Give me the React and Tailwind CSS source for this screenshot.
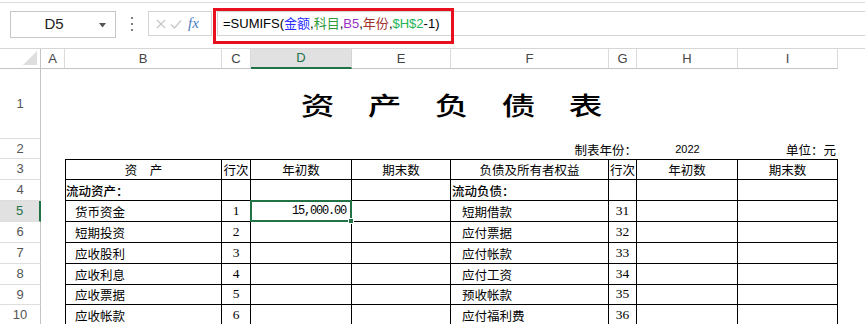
import React from 'react';

const CJK = "font-['Noto_Sans_CJK_SC',sans-serif]";
const SERIF = "font-['Liberation_Serif',serif]";
const HDR = "font-['Liberation_Sans','Noto_Sans_CJK_SC',sans-serif]";

const colLetters = ['A', 'B', 'C', 'D', 'E', 'F', 'G', 'H', 'I'];

const left = [
  ['货币资金', '1'],
  ['短期投资', '2'],
  ['应收股利', '3'],
  ['应收利息', '4'],
  ['应收票据', '5'],
  ['应收帐款', '6'],
];
const right = [
  ['短期借款', '31'],
  ['应付票据', '32'],
  ['应付帐款', '33'],
  ['应付工资', '34'],
  ['预收帐款', '35'],
  ['应付福利费', '36'],
];

function RowHeader({ n }) {
  const sel = n === 5;
  return (
    <div
      className={
        'flex items-center justify-center border-b border-[#dedede] text-[13px] ' +
        HDR +
        (sel
          ? ' bg-[#e1e1e1] text-[#217346] border-r-2 border-r-[#217346]'
          : ' text-[#555] border-r border-r-[#c4c4c4] bg-white')
      }
    >
      {n}
    </div>
  );
}

function T({ className = '', font = CJK, children }) {
  return (
    <div className={'flex items-end whitespace-nowrap border-r border-b border-black pb-[2px] text-[12.5px] leading-[14px] text-black ' + font + ' ' + className}>
      {children}
    </div>
  );
}

function N({ children }) {
  return (
    <div className={'flex items-end justify-center border-r border-b border-black pb-[3px] text-[13.5px] leading-[14px] text-black ' + SERIF}>
      {children}
    </div>
  );
}

function TitleChar({ c }) {
  return <span className="inline-block w-[25px] scale-x-[1.35] text-center text-[25px] font-medium leading-[30px]">{c}</span>;
}

export default function App() {
  return (
    <div className="h-[324px] w-[865px] overflow-hidden bg-white">
      {/* formula bar area */}
      <div className="relative h-[47px] border-b border-[#d6d6d6]">
        <div className="mt-[2px] h-px bg-[#dcdcdc]" />
        <div className="mt-[8px] flex items-start">
          <div className="ml-[10px] flex h-[27px] w-[106px] items-center border border-[#c6c6c6]">
            <span className={'flex-1 pl-[4px] text-center text-[15px] text-[#222] ' + HDR}>D5</span>
            <svg width="20" height="8" viewBox="0 0 20 8" className="mr-[2px]">
              <path d="M6 2 L13 2 L9.5 6.5 Z" fill="#555" />
            </svg>
          </div>
          <div className="flex h-[25px] w-[32px] flex-col items-center justify-center gap-[4px]">
            <span className="h-[2px] w-[2px] rounded-full bg-[#555]" />
            <span className="h-[2px] w-[2px] rounded-full bg-[#555]" />
            <span className="h-[2px] w-[2px] rounded-full bg-[#555]" />
          </div>
          <div className="flex h-[25px] w-[64px] items-center border border-[#d4d4d4]">
            <svg width="12" height="12" viewBox="0 0 12 12" className="ml-[6px]">
              <path d="M2 2 L10 10 M10 2 L2 10" stroke="#c8c8c8" strokeWidth="1.3" fill="none" />
            </svg>
            <svg width="12" height="12" viewBox="0 0 12 12" className="ml-[3px]">
              <path d="M1 6.5 L4.5 10 L11 2.5" stroke="#c8c8c8" strokeWidth="1.3" fill="none" />
            </svg>
            <span className="ml-[6px] font-['Liberation_Serif',serif] text-[15px] italic leading-none text-[#4a7cc4]">fx</span>
          </div>
          <div className="ml-[5px] flex h-[25px] flex-1 items-center border-y border-l border-[#d4d4d4] pl-[5px]">
            <span className={'whitespace-nowrap text-[13px] text-black ' + HDR}>
              =SUMIFS(
              <span className="text-[#2b2bff]">金额</span>,
              <span className="text-[#2f9a3a]">科目</span>,
              <span className="text-[#9b30c8]">B5</span>,
              <span className="text-[#a0302a]">年份</span>,
              <span className="text-[#22b455]">$H$2</span>-1)
            </span>
          </div>
        </div>
        <div className="pointer-events-none absolute left-[213px] top-[6px] h-[36px] w-[241px] border-[3px] border-[#e8101e]" />
      </div>

      {/* sheet */}
      <div className="grid grid-cols-[41px_24px_157px_29px_101px_99px_158px_28px_101px_100px_1fr] grid-rows-[20px_70px_20px_21px_21px_21px_21px_21px_21px_20px_21px]">
        {/* column headers */}
        <div className="relative border-r border-b border-[#c4c4c4] bg-white">
          <svg width="14" height="14" viewBox="0 0 14 14" className="absolute bottom-[3px] right-[3px]">
            <path d="M14 0 L14 14 L0 14 Z" fill="#dedede" />
          </svg>
        </div>
        {colLetters.map((c) =>
          c === 'D' ? (
            <div key={c} className={'flex items-center justify-center border-r border-[#d4d4d4] border-b-2 border-b-[#217346] bg-[#e1e1e1] text-[13px] text-[#217346] ' + HDR}>
              {c}
            </div>
          ) : (
            <div key={c} className={'flex items-center justify-center border-r border-b border-r-[#dadada] border-b-[#c4c4c4] bg-white text-[13px] text-[#444] ' + HDR}>
              {c}
            </div>
          )
        )}
        <div />

        {/* row 1 */}
        <RowHeader n={1} />
        <div />
        <div className="col-span-8 flex items-center justify-center gap-[42px] font-['Noto_Sans_CJK_SC',serif] text-black">
          {['资', '产', '负', '债', '表'].map((c) => (
            <TitleChar key={c} c={c} />
          ))}
        </div>
        <div />

        {/* row 2 */}
        <RowHeader n={2} />
        <div />
        <div />
        <div />
        <div />
        <div />
        <div className={'col-span-2 flex items-end justify-end whitespace-nowrap pb-[2px] text-[12.5px] leading-[14px] ' + CJK}>制表年份：</div>
        <div className="flex items-end justify-center pb-[3px] font-['Liberation_Sans',sans-serif] text-[11px] leading-[13px]">2022</div>
        <div className={'flex items-end justify-end whitespace-nowrap pb-[2px] pr-[2px] text-[12.5px] leading-[14px] ' + CJK}>单位：元</div>
        <div />

        {/* row 3 */}
        <RowHeader n={3} />
        <div />
        <T className="justify-center border-t border-l">资　产</T>
        <T className="justify-center border-t">行次</T>
        <T className="justify-center border-t">年初数</T>
        <T className="justify-center border-t">期末数</T>
        <T className="justify-center border-t">负债及所有者权益</T>
        <T className="justify-center border-t">行次</T>
        <T className="justify-center border-t">年初数</T>
        <T className="justify-center border-t">期末数</T>
        <div />

        {/* row 4 */}
        <RowHeader n={4} />
        <div />
        <T className="border-l pl-0 font-medium">流动资产：</T>
        <T />
        <T />
        <T />
        <T className="pl-[1px] font-medium">流动负债：</T>
        <T />
        <T />
        <T />
        <div />

        {/* rows 5-10 */}
        {left.map((l, i) => {
          const r = right[i];
          const n = i + 5;
          return (
            <React.Fragment key={n}>
              <RowHeader n={n} />
              <div />
              <T className="border-l pl-[9px]">{l[0]}</T>
              <N>{l[1]}</N>
              {n === 5 ? (
                <div className="relative flex items-end justify-end border-r border-b border-black pb-[3px] pr-[5px] font-['Liberation_Mono',monospace] text-[12px] leading-[13px] tracking-[-1.2px] text-black">
                  15,000.00
                  <div className="absolute -left-px -top-[1px] -right-px -bottom-px border-2 border-[#217346]" />
                  <div className="absolute -bottom-[3px] -right-[3px] h-[6px] w-[6px] border border-white bg-[#217346]" />
                </div>
              ) : (
                <T />
              )}
              <T />
              <T className="pl-[11px]">{r[0]}</T>
              <N>{r[1]}</N>
              <T />
              <T />
              <div />
            </React.Fragment>
          );
        })}
      </div>
    </div>
  );
}
